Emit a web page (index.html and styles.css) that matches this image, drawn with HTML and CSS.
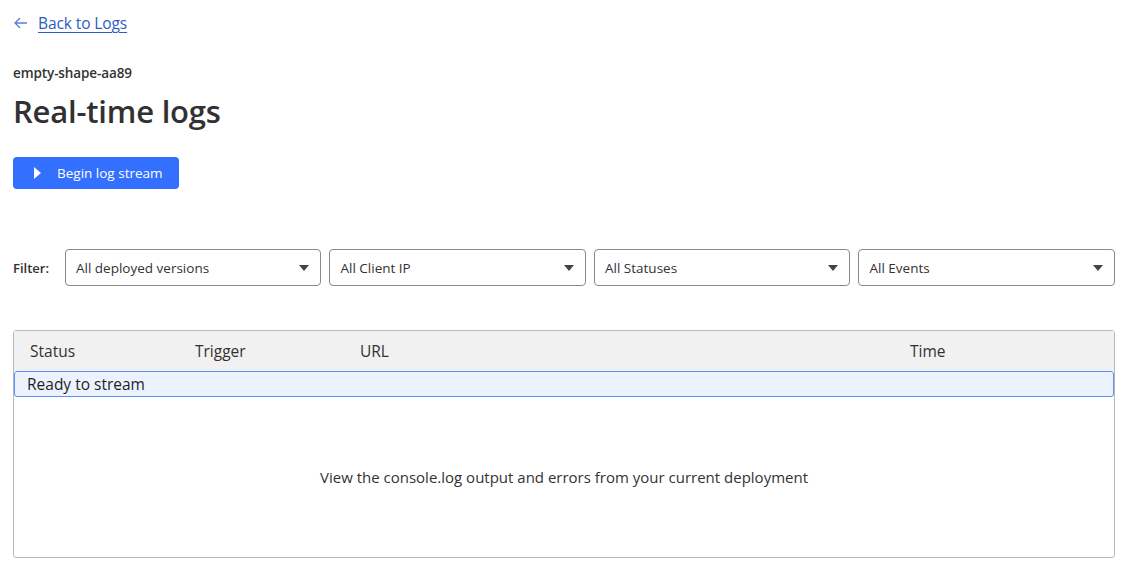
FILE: index.html
```html
<!DOCTYPE html>
<html>
<head>
    <title>Real-time logs</title>
    <link rel="stylesheet" href="styles.css">
</head>
<body>
    <div class="page">
        <a class="back-link" href="#">
            <svg class="back-arrow" width="14" height="12" viewBox="0 0 14 12">
                <path d="M13 6H1.5M6 1L1 6l5 5" fill="none" stroke="#5b7fd8" stroke-width="1.3"/>
            </svg>
            <span>Back to Logs</span>
        </a>

        <div class="worker-name">empty-shape-aa89</div>
        <h1>Real-time logs</h1>

        <button class="stream-btn">
            <svg width="8" height="12" viewBox="0 0 8 12"><path d="M0 0l7 6-7 6z" fill="#fff"/></svg>
            Begin log stream
        </button>

        <!-- Filters -->
        <div class="filters">
            <span class="filter-label">Filter:</span>
            <div class="select"><span>All deployed versions</span><i class="caret"></i></div>
            <div class="select"><span>All Client IP</span><i class="caret"></i></div>
            <div class="select"><span>All Statuses</span><i class="caret"></i></div>
            <div class="select"><span>All Events</span><i class="caret"></i></div>
        </div>

        <!-- Log table -->
        <div class="log-table">
            <div class="log-head">
                <div class="col-status">Status</div>
                <div class="col-trigger">Trigger</div>
                <div class="col-url">URL</div>
                <div class="col-time">Time</div>
            </div>
            <div class="ready-row">Ready to stream</div>
            <div class="empty-msg">View the console.log output and errors from your current deployment</div>
        </div>
    </div>
</body>
</html>
```

FILE: styles.css
```css
body { margin: 0; font-family: "Open Sans", "Noto Sans", sans-serif; color: #313131; background: #fff; }
.page { padding: 10px 16px 0 13px; }

.back-link { display: inline-flex; align-items: center; gap: 10px; color: #2c5cc5; font-size: 15.5px; text-decoration: none; height: 26px; }
.back-link span { text-decoration: underline; text-underline-offset: 3px; letter-spacing: -0.1px; }
.back-arrow { margin-left: 1px; }

.worker-name { margin-top: 28px; font-size: 13.5px; font-weight: 600; color: #333; letter-spacing: -0.1px; }
h1 { margin: 8px 0 0; font-size: 31px; font-weight: 600; letter-spacing: -0.2px; color: #313131; line-height: 42px; }

.stream-btn { margin-top: 25px; display: flex; align-items: center; gap: 15px; height: 32px; padding: 0 16px 0 21px; background: #3370ff; color: #fff; border: none; border-radius: 4px; font-family: inherit; font-size: 13.5px; cursor: pointer; }

.filters { display: flex; align-items: center; gap: 8px; margin-top: 60px; }
.filter-label { font-size: 13px; font-weight: 600; margin-right: 8px; }
.select { flex: 1; display: flex; align-items: center; justify-content: space-between; height: 35px; padding: 0 10px; border: 1px solid #8a8a8a; border-radius: 4px; font-size: 13.5px; color: #333; }
.caret { width: 0; height: 0; border-left: 5px solid transparent; border-right: 5px solid transparent; border-top: 6px solid #444; margin-right: 1px; }

.log-table { margin-top: 44px; border: 1px solid #b8b8b8; border-radius: 3px; height: 226px; }
.log-head { display: flex; align-items: center; height: 40px; background: #f1f1f1; padding-left: 16px; font-size: 15.5px; font-weight: 500; }
.col-status, .col-trigger { width: 165px; }
.col-url { width: 550px; }
.ready-row { height: 24px; line-height: 24px; padding-left: 12px; background: #ecf3ff; border: 1px solid #5a91f5; border-radius: 3px; font-size: 15.5px; font-weight: 500; color: #1f1f1f; }
.empty-msg { text-align: center; font-size: 15px; margin-top: 70px; color: #333; }
```
